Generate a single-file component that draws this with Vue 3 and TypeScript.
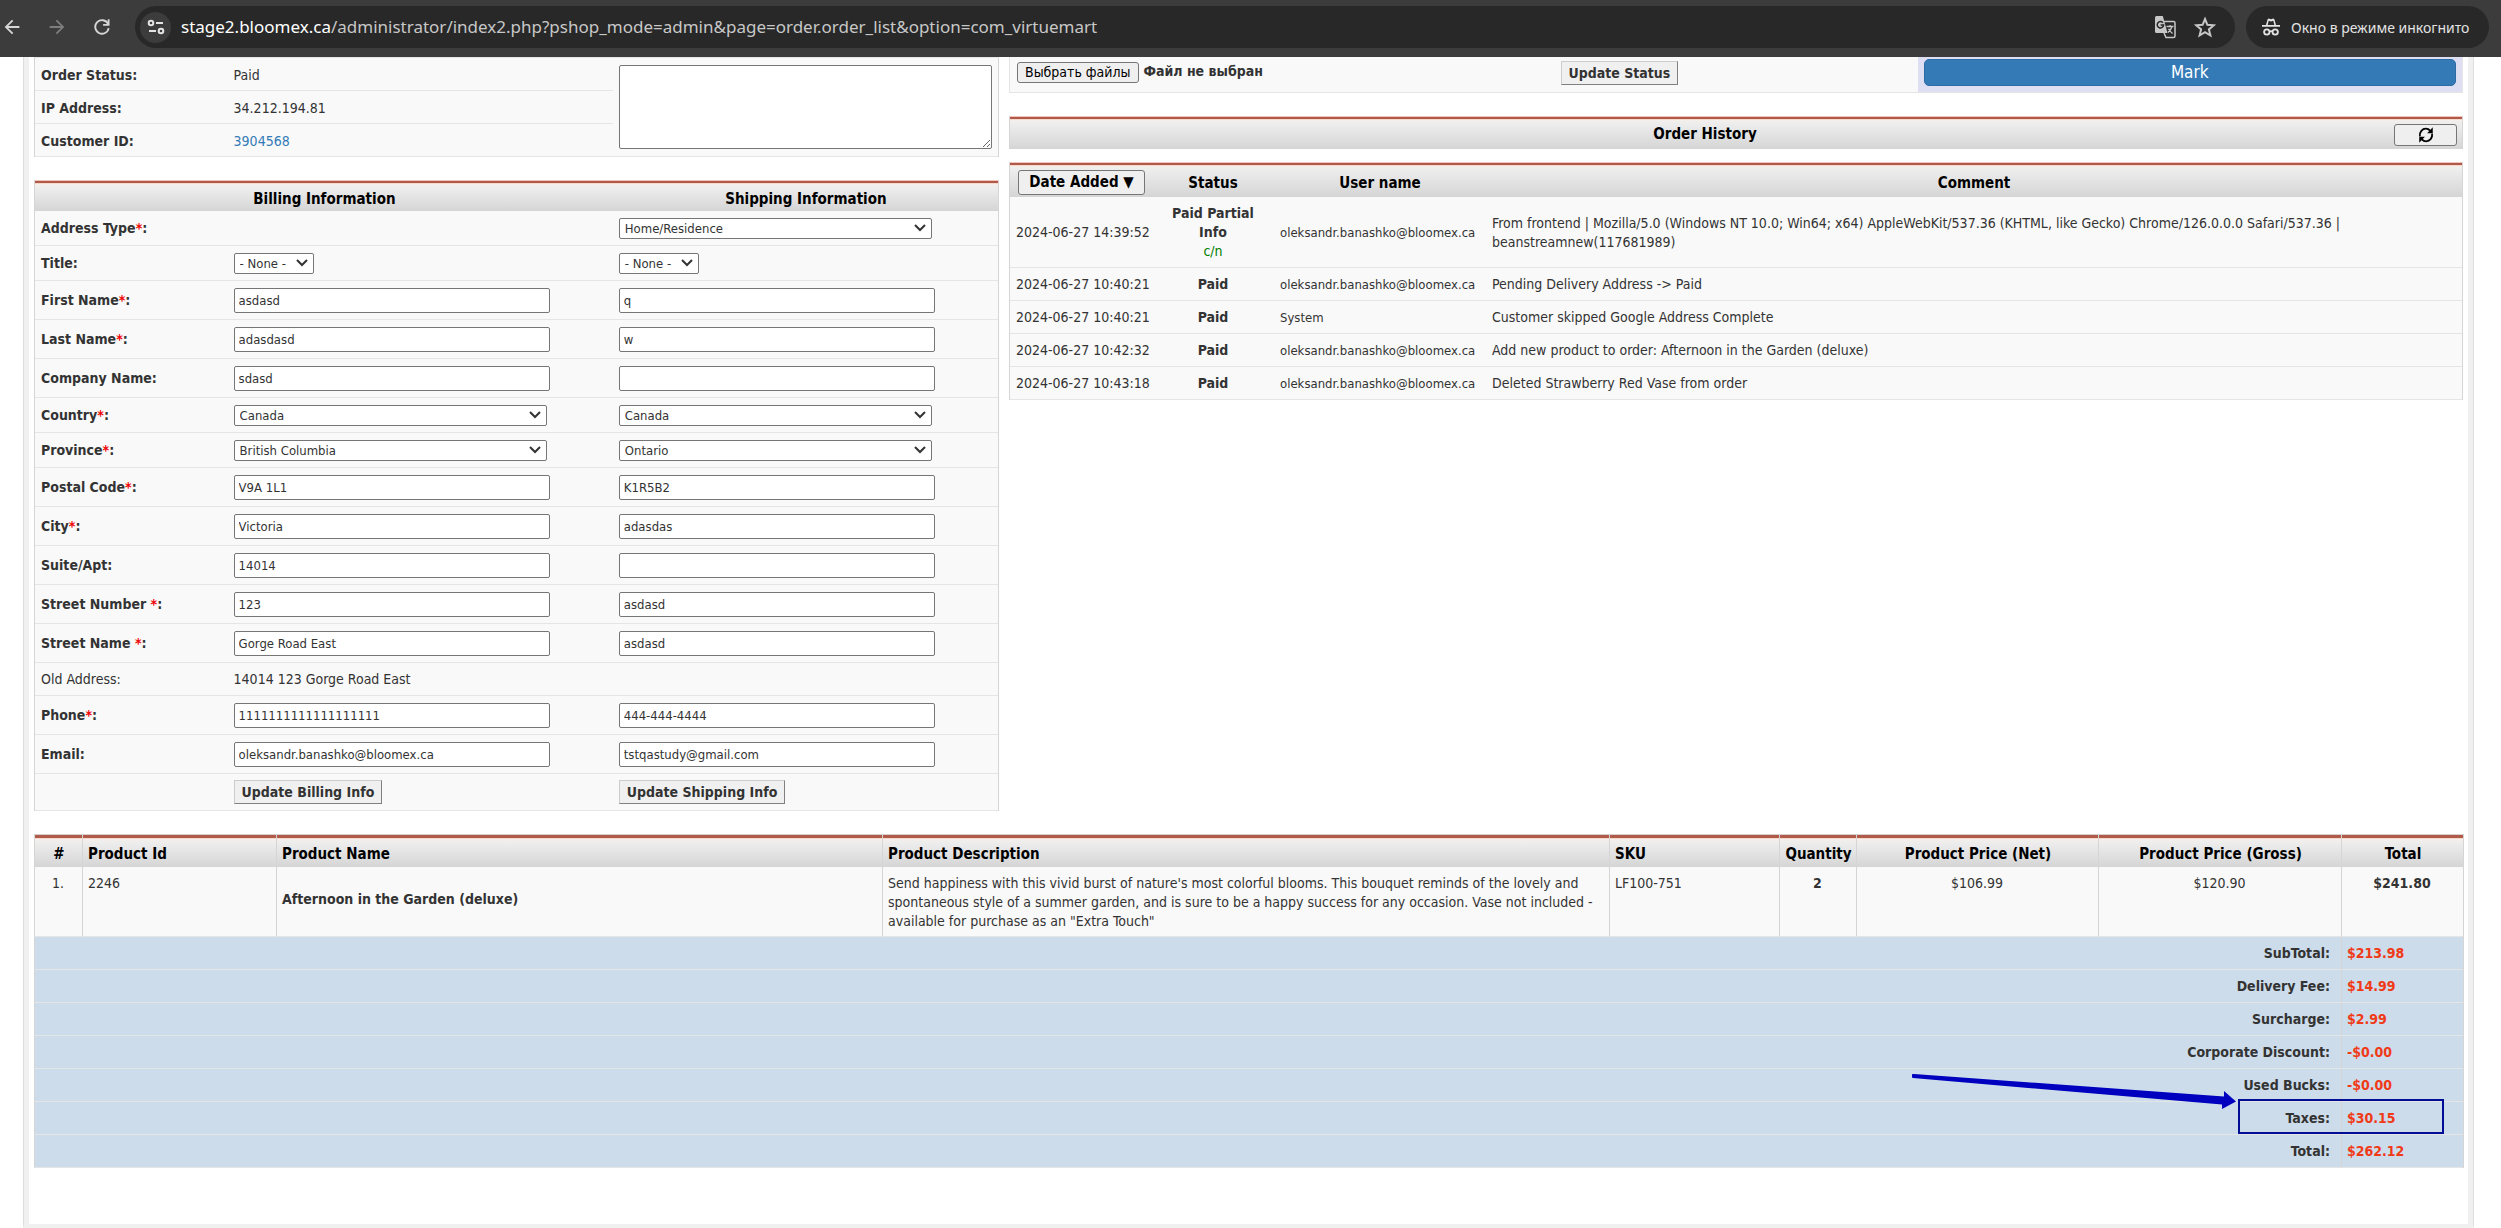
<script setup lang="ts">
interface Field {
  id: string
  label: string
  required?: boolean
  spaced?: boolean
  kind: 'input' | 'select' | 'short' | 'text'
  billing?: string
  shipping?: string
}

interface HistoryRow {
  date: string
  status: string
  note?: string
  user: string
  comment: string
}

interface TotalRow {
  label: string
  value: string
  marked?: boolean
}

const summary = [
  { label: 'Order Status:', value: 'Paid' },
  { label: 'IP Address:', value: '34.212.194.81' },
  { label: 'Customer ID:', value: '3904568', link: true },
]

const fields: Field[] = [
  { id: 'addr-type', label: 'Address Type', required: true, kind: 'select', shipping: 'Home/Residence' },
  { id: 'title', label: 'Title', kind: 'short', billing: '- None -', shipping: '- None -' },
  { id: 'first', label: 'First Name', required: true, kind: 'input', billing: 'asdasd', shipping: 'q' },
  { id: 'last', label: 'Last Name', required: true, kind: 'input', billing: 'adasdasd', shipping: 'w' },
  { id: 'company', label: 'Company Name', kind: 'input', billing: 'sdasd', shipping: '' },
  { id: 'country', label: 'Country', required: true, kind: 'select', billing: 'Canada', shipping: 'Canada' },
  { id: 'province', label: 'Province', required: true, kind: 'select', billing: 'British Columbia', shipping: 'Ontario' },
  { id: 'postal', label: 'Postal Code', required: true, kind: 'input', billing: 'V9A 1L1', shipping: 'K1R5B2' },
  { id: 'city', label: 'City', required: true, kind: 'input', billing: 'Victoria', shipping: 'adasdas' },
  { id: 'suite', label: 'Suite/Apt', kind: 'input', billing: '14014', shipping: '' },
  { id: 'street-no', label: 'Street Number', required: true, spaced: true, kind: 'input', billing: '123', shipping: 'asdasd' },
  { id: 'street', label: 'Street Name', required: true, spaced: true, kind: 'input', billing: 'Gorge Road East', shipping: 'asdasd' },
  { id: 'old', label: 'Old Address', kind: 'text', billing: '14014 123 Gorge Road East' },
  { id: 'phone', label: 'Phone', required: true, kind: 'input', billing: '1111111111111111111', shipping: '444-444-4444' },
  { id: 'email', label: 'Email', kind: 'input', billing: 'oleksandr.banashko@bloomex.ca', shipping: 'tstqastudy@gmail.com' },
]

const sides = ['billing', 'shipping'] as const

const history: HistoryRow[] = [
  {
    date: '2024-06-27 14:39:52',
    status: 'Paid Partial Info',
    note: 'c/n',
    user: 'oleksandr.banashko@bloomex.ca',
    comment:
      'From frontend | Mozilla/5.0 (Windows NT 10.0; Win64; x64) AppleWebKit/537.36 (KHTML, like Gecko) Chrome/126.0.0.0 Safari/537.36 | beanstreamnew(117681989)',
  },
  { date: '2024-06-27 10:40:21', status: 'Paid', user: 'oleksandr.banashko@bloomex.ca', comment: 'Pending Delivery Address -> Paid' },
  { date: '2024-06-27 10:40:21', status: 'Paid', user: 'System', comment: 'Customer skipped Google Address Complete' },
  { date: '2024-06-27 10:42:32', status: 'Paid', user: 'oleksandr.banashko@bloomex.ca', comment: 'Add new product to order: Afternoon in the Garden (deluxe)' },
  { date: '2024-06-27 10:43:18', status: 'Paid', user: 'oleksandr.banashko@bloomex.ca', comment: 'Deleted Strawberry Red Vase from order' },
]

const totals: TotalRow[] = [
  { label: 'SubTotal:', value: '$213.98' },
  { label: 'Delivery Fee:', value: '$14.99' },
  { label: 'Surcharge:', value: '$2.99' },
  { label: 'Corporate Discount:', value: '-$0.00' },
  { label: 'Used Bucks:', value: '-$0.00' },
  { label: 'Taxes:', value: '$30.15', marked: true },
  { label: 'Total:', value: '$262.12' },
]
</script>

<template>
  <div class="window">
    <header class="toolbar">
      <nav class="nav">
        <button type="button" aria-label="Back">
          <svg viewBox="0 0 24 24"><path fill="#d6d6d6" d="M20 11H7.83l5.59-5.59L12 4l-8 8 8 8 1.41-1.41L7.83 13H20v-2z" /></svg>
        </button>
        <button type="button" aria-label="Forward">
          <svg viewBox="0 0 24 24"><path fill="#7d7d7d" d="M4 13h12.17l-5.59 5.59L12 20l8-8-8-8-1.41 1.41L16.17 11H4v2z" /></svg>
        </button>
        <button type="button" aria-label="Reload">
          <svg viewBox="0 0 24 24" fill="none" stroke="#d6d6d6" stroke-width="2">
            <path d="M18.6 8.6A7.4 7.4 0 1 0 19.3 13.2" />
            <path d="M19.2 3.6v6h-6" />
          </svg>
        </button>
      </nav>
      <div class="address">
        <button class="site" type="button" aria-label="Site information">
          <svg viewBox="0 0 20 20" fill="none" stroke="#e3e3e3" stroke-width="2">
            <circle cx="5" cy="6" r="2.3" />
            <path d="M10 6h7" />
            <circle cx="15" cy="14" r="2.3" />
            <path d="M3 14h7" />
          </svg>
        </button>
        <div class="url"><b>stage2.bloomex.ca</b>/administrator/index2.php?pshop_mode=admin&amp;page=order.order_list&amp;option=com_virtuemart</div>
        <button class="tool" type="button" aria-label="Translate">
          <svg viewBox="0 0 24 24">
            <path d="M11 6.500h9.500A1.500 1.500 0 0 1 22 8v13a1.500 1.500 0 0 1-1.500 1.500H13L11 18" fill="none" stroke="#c7c7c7" stroke-width="1.500" />
            <path d="M3.500 1h6.300l4.700 17h-11A1.500 1.500 0 0 1 2 16.500v-14A1.500 1.500 0 0 1 3.500 1z" fill="#c7c7c7" />
            <path d="M9.900 7.800A3.200 3.200 0 1 0 10.600 10H7.600" fill="none" stroke="#282828" stroke-width="1.500" />
            <path d="M13.500 11.500h7M17 10v1.500M19 11.500c-.8 2.800-2.300 4.500-4 6M15.500 13.700c.9 1.800 2.300 3.300 4 4.800" fill="none" stroke="#c7c7c7" stroke-width="1.300" />
          </svg>
        </button>
        <button class="tool" type="button" aria-label="Bookmark">
          <svg viewBox="0 0 24 24" fill="none" stroke="#c7c7c7" stroke-width="2">
            <path d="M12 4l2.400 5.800 6.300.5-4.800 4.100 1.500 6.100L12 17.200l-5.400 3.300 1.500-6.100-4.800-4.100 6.300-.5z" />
          </svg>
        </button>
      </div>
      <button class="incognito" type="button">
        <svg viewBox="0 0 20 20">
          <path d="M6.600 2.200l1.100-.7L10 2.200l2.300-.7 1.100.7L15 8h4v1.800H1V8h4z" fill="#e3e3e3" />
          <path d="M7.700 3.800l-1 4.200h6.600l-1-4.200L10 4.500z" fill="#282828" />
          <g fill="none" stroke="#e3e3e3" stroke-width="1.800">
            <circle cx="5.800" cy="15" r="2.700" />
            <circle cx="14.200" cy="15" r="2.700" />
            <path d="M8.500 14.600q1.500-1 3 0" />
          </g>
        </svg>
        <span>Окно в режиме инкогнито</span>
      </button>
    </header>

    <main class="frame">
      <div class="columns">
        <section class="left">
          <table class="grid summary">
            <colgroup><col class="w20" /><col class="w40" /><col class="w40" /></colgroup>
            <tbody>
              <tr v-for="(row, i) in summary" :key="row.label">
                <th scope="row">{{ row.label }}</th>
                <td>
                  <a v-if="row.link" href="#customer">{{ row.value }}</a>
                  <template v-else>{{ row.value }}</template>
                </td>
                <td v-if="i === 0" rowspan="3" class="notes"><textarea aria-label="Order comment"></textarea></td>
              </tr>
            </tbody>
          </table>

          <table class="grid form">
            <colgroup><col class="w20" /><col class="w40" /><col class="w40" /></colgroup>
            <thead>
              <tr>
                <th colspan="2">Billing Information</th>
                <th>Shipping Information</th>
              </tr>
            </thead>
            <tbody>
              <tr v-for="f in fields" :key="f.id" :class="f.kind">
                <th scope="row" :class="{ plain: f.kind === 'text' }">
                  <label :for="'billing-' + f.id">{{ f.label }}{{ f.spaced ? ' ' : '' }}<i v-if="f.required">*</i>:</label>
                </th>
                <td v-for="side in sides" :key="side">
                  <template v-if="f[side] !== undefined">
                    <input v-if="f.kind === 'input'" :id="side + '-' + f.id" type="text" :value="f[side]" :aria-label="side + ' ' + f.label" />
                    <template v-else-if="f.kind === 'text'">{{ f[side] }}</template>
                    <select v-else :id="side + '-' + f.id" :aria-label="side + ' ' + f.label">
                      <option>{{ f[side] }}</option>
                    </select>
                  </template>
                </td>
              </tr>
              <tr class="actions">
                <td></td>
                <td><button class="classic" type="button">Update Billing Info</button></td>
                <td><button class="classic" type="button">Update Shipping Info</button></td>
              </tr>
            </tbody>
          </table>
        </section>

        <section class="right">
          <div class="status-bar">
            <label class="file">
              <input type="file" multiple />
              <span class="file-button">Выбрать файлы</span>
              <b>Файл не выбран</b>
            </label>
            <div class="update"><button class="classic" type="button">Update Status</button></div>
            <div class="mark"><button type="button">Mark</button></div>
          </div>

          <div class="title-bar">
            <h2>Order History</h2>
            <button type="button" aria-label="Refresh">
              <svg viewBox="0 0 20 20">
                <path d="M3.200 11.500C2.500 6.500 6 3 9.800 3c2 0 3.600.8 4.700 2.100M16.800 8.500C17.500 13.500 14 17 10.200 17c-2 0-3.600-.8-4.700-2.100" fill="none" stroke="#000" stroke-width="2" />
                <path d="M17.500 1.500v6.500h-6.300zM2.500 18.500V12h6.300z" fill="#000" />
              </svg>
            </button>
          </div>

          <table class="grid history">
            <colgroup><col class="c-date" /><col class="c-status" /><col class="c-user" /><col class="c-comment" /></colgroup>
            <thead>
              <tr>
                <th><button type="button">Date Added ▼</button></th>
                <th>Status</th>
                <th>User name</th>
                <th>Comment</th>
              </tr>
            </thead>
            <tbody>
              <tr v-for="(h, i) in history" :key="i">
                <td class="date">{{ h.date }}</td>
                <td class="center"><b>{{ h.status }}</b><span v-if="h.note" class="note">{{ h.note }}</span></td>
                <td class="user">{{ h.user }}</td>
                <td>{{ h.comment }}</td>
              </tr>
            </tbody>
          </table>
        </section>
      </div>

      <table class="grid products">
        <colgroup>
          <col class="p-num" /><col class="p-id" /><col class="p-name" /><col class="p-desc" /><col class="p-sku" />
          <col class="p-qty" /><col class="p-net" /><col class="p-gross" /><col class="p-total" />
        </colgroup>
        <thead>
          <tr>
            <th class="center">#</th>
            <th>Product Id</th>
            <th>Product Name</th>
            <th>Product Description</th>
            <th>SKU</th>
            <th class="center">Quantity</th>
            <th class="center">Product Price (Net)</th>
            <th class="center">Product Price (Gross)</th>
            <th class="center">Total</th>
          </tr>
        </thead>
        <tbody>
          <tr class="item">
            <td class="center">1.</td>
            <td>2246</td>
            <td class="name"><b>Afternoon in the Garden (deluxe)</b></td>
            <td>Send happiness with this vivid burst of nature's most colorful blooms. This bouquet reminds of the lovely and spontaneous style of a summer garden, and is sure to be a happy success for any occasion. Vase not included - available for purchase as an "Extra Touch"</td>
            <td>LF100-751</td>
            <td class="center"><b>2</b></td>
            <td class="center">$106.99</td>
            <td class="center">$120.90</td>
            <td class="center"><b>$241.80</b></td>
          </tr>
          <tr v-for="t in totals" :key="t.label" class="sum">
            <th colspan="8" scope="row">{{ t.label }}</th>
            <td>
              {{ t.value }}
              <template v-if="t.marked">
                <span class="marker"></span>
                <svg class="arrow" viewBox="0 0 324 36"><path d="M2 0L312 22.500V17L324 27.500 310 35V30.500L1 4A2 2 0 0 1 2 0z" fill="#0000bf" /></svg>
              </template>
            </td>
          </tr>
        </tbody>
      </table>
    </main>
  </div>
</template>

<style>
body {
  margin: 0;
  background: #fff;
}
</style>

<style scoped>
.window {
  font-family: "DejaVu Sans Condensed", "Noto Sans", sans-serif;
  font-size: 14px;
  line-height: 19px;
  color: #333;
}
.window * {
  box-sizing: border-box;
}
button,
input,
select,
textarea {
  font: inherit;
  color: inherit;
  margin: 0;
}
.toolbar {
  display: flex;
  align-items: center;
  height: 57px;
  padding: 0 12px 3px 0;
  background: #3c3c3c;
}
.toolbar button {
  border: 0;
  padding: 0;
  background: none;
  flex: none;
}
.nav {
  display: flex;
  gap: 21px;
  margin-right: 21px;
}
.nav button {
  width: 24px;
  height: 24px;
}
.nav svg {
  display: block;
  width: 22px;
  height: 22px;
  margin: 1px auto;
}
.address {
  flex: 1;
  display: flex;
  align-items: center;
  height: 42px;
  padding: 0 18px 0 5px;
  border-radius: 21px;
  background: #282828;
}
.toolbar .site {
  display: grid;
  place-items: center;
  width: 31px;
  height: 31px;
  margin-right: 10px;
  border-radius: 50%;
  background: #3c3c3c;
}
.site svg {
  width: 20px;
  height: 20px;
}
.url {
  flex: 1;
  font-family: "Noto Sans", sans-serif;
  font-size: 17px;
  line-height: 24px;
  color: #c7c7c7;
  white-space: nowrap;
  overflow: hidden;
}
.url b {
  font-weight: 400;
  color: #fff;
}
.tool {
  width: 24px;
  height: 24px;
  margin-left: 16px;
}
.tool svg {
  display: block;
  width: 24px;
  height: 24px;
}
.toolbar .incognito {
  display: flex;
  align-items: center;
  gap: 10px;
  min-width: 243px;
  height: 42px;
  margin-left: 11px;
  padding: 0 15px;
  border-radius: 21px;
  background: #282828;
  font-family: "Noto Sans", sans-serif;
  font-size: 14px;
  color: #e3e3e3;
}
.incognito svg {
  width: 20px;
  height: 20px;
}
.frame {
  margin: 0 27px 0 23px;
  padding: 0 5px 56px;
  border: 1px solid #ddd;
  border-width: 0 1px 4px;
  border-bottom-color: #f0f0f0;
  box-shadow: inset 5px 0 #f0f0f0, inset -5px 0 #f0f0f0;
}
.columns,
.products {
  margin: 0 5px;
}
.columns {
  display: flex;
  align-items: flex-start;
  gap: 10px;
}
.left {
  flex: 965 1 0;
  min-width: 0;
}
.right {
  flex: 1454 1 0;
  min-width: 0;
}
.grid {
  width: 100%;
  table-layout: fixed;
  border-collapse: separate;
  border-spacing: 0;
  border: 1px solid #d5d5d5;
  border-width: 0 1px;
  background: #f9f9f9;
}
.grid td,
.grid tbody th {
  padding: 0 6px;
  border-bottom: 1px solid #e5e5e5;
  text-align: left;
  font-weight: 400;
}
.grid tbody th {
  font-weight: 700;
}
.grid tbody th.plain {
  font-weight: 400;
}
.grid thead th {
  padding: 8px 4px 0 5px;
  font-size: 15px;
  font-weight: 700;
  color: #000;
}
.grid thead tr,
.title-bar {
  background: linear-gradient(#f0c4b8 1px, #b05a4b 1px 3px, #f7d8cb 3px 4px, #f3f0ec 4px, #ececec 9px, #d5d5d5);
}
.grid .center {
  text-align: center;
}
.w20 {
  width: 20%;
}
.w40 {
  width: 40%;
}
.summary {
  border-top: 1px solid #e5e5e5;
  margin-bottom: 23px;
}
.summary th,
.summary td {
  height: 33px;
}
.grid.summary th,
.grid.summary td:not(.notes) {
  padding-top: 2px;
}
.summary a {
  color: #337ab7;
  text-decoration: none;
}
.notes textarea {
  display: block;
  width: 100%;
  height: 84px;
  border: 1px solid #767676;
  border-radius: 2px;
  background: #fff;
}
.form thead tr {
  height: 31px;
}
.form tbody tr {
  height: 39px;
}
.form tbody tr.select,
.form tbody tr.short {
  height: 35px;
}
.form tbody tr.text {
  height: 33px;
}
.form tbody tr.actions {
  height: 37px;
}
.form i {
  font-style: normal;
  color: #ee0000;
}
.form input {
  display: block;
  width: 316px;
  max-width: 100%;
  height: 25px;
  padding: 0 4px;
  border: 1px solid #767676;
  border-radius: 2px;
  background: #fff;
  font-size: 13px;
}
.form select {
  display: block;
  appearance: none;
  width: 313px;
  max-width: 100%;
  height: 21px;
  padding: 0 20px 0 5px;
  border: 1px solid #767676;
  border-radius: 2px;
  background: #fff url("data:image/svg+xml,%3Csvg xmlns='http://www.w3.org/2000/svg' width='12' height='8' viewBox='0 0 12 8'%3E%3Cpath d='M1 1l5 5 5-5' fill='none' stroke='%23333' stroke-width='2'/%3E%3C/svg%3E") no-repeat right 5px center;
  font-size: 13px;
  line-height: 19px;
}
.form .short select {
  width: 80px;
}
.classic {
  display: block;
  height: 24px;
  padding: 0 7px;
  border: 1px solid;
  border-color: #ccc #808080 #808080 #ccc;
  background: #f0f0f0;
  font-weight: 700;
  line-height: 19px;
  white-space: nowrap;
}
.status-bar {
  display: grid;
  grid-template-columns: 3fr 2fr 3fr;
  height: 36px;
  margin-bottom: 23px;
  border: 1px solid #e5e5e5;
  border-width: 0 1px 1px;
  background: #f9f9f9;
}
.file {
  display: flex;
  align-items: flex-start;
  padding: 5px 7px;
  gap: 5px;
}
.file input {
  position: absolute;
  width: 1px;
  height: 1px;
  opacity: 0;
}
.file-button {
  height: 21px;
  padding: 0 7px;
  border: 1px solid #767676;
  border-radius: 3px;
  background: #efefef;
  color: #000;
  white-space: nowrap;
}
.update {
  padding: 4px 6px;
}
.mark {
  padding: 2px 6px 6px;
  background: #dedff3;
}
.mark button {
  display: block;
  width: 100%;
  height: 27px;
  padding: 0;
  border: 1px solid #2e6da4;
  border-radius: 5px;
  background: #337ab7;
  color: #fff;
  font-size: 17px;
}
.title-bar {
  display: flex;
  align-items: center;
  height: 33px;
  margin-bottom: 13px;
  padding: 4px 5px 0 0;
  border: 1px solid #d5d5d5;
  border-width: 0 1px;
}
.title-bar h2 {
  flex: 1;
  margin: 0;
  padding-left: 6px;
  text-align: center;
  font-size: 15px;
  line-height: 19px;
  color: #000;
}
.title-bar button {
  display: grid;
  place-items: center;
  width: 63px;
  height: 22px;
  padding: 0;
  border: 1px solid #767676;
  border-radius: 3px;
  background: #efefef;
}
.title-bar svg {
  width: 18px;
  height: 18px;
}
.c-date {
  width: 142px;
}
.c-status {
  width: 122px;
}
.c-user {
  width: 212px;
}
.history thead tr {
  height: 35px;
}
.grid.history thead th {
  padding: 8px 6px 0;
}
.grid.history thead th:first-child {
  padding-top: 6px;
}
.history thead button {
  display: block;
  width: 127px;
  height: 25px;
  margin-left: 2px;
  padding: 0;
  border: 1px solid #767676;
  border-radius: 3px;
  background: #efefef;
  color: #000;
  font-weight: 700;
  white-space: nowrap;
}
.history tbody td {
  padding: 7px 6px 6px;
}
.history .date,
.history .user {
  white-space: nowrap;
}
.history .user {
  font-size: 13px;
}
.note {
  display: block;
  color: #008000;
}
.products {
  width: calc(100% - 10px);
  margin-top: 23px;
  border-left: 0;
}
.products thead tr {
  height: 33px;
  background: linear-gradient(#d8d0cd 1px, #b05a4b 1px 4px, #f7d8cb 4px 5px, #f3f0ec 5px, #ececec 10px, #d5d5d5);
}
.products thead th {
  text-align: left;
}
.products th,
.products td {
  border-left: 1px solid #d5d5d5;
}
.products .item td {
  padding: 7px 6px 5px 5px;
  vertical-align: top;
}
.products .item .name {
  padding-top: 23px;
}
.products .sum {
  height: 33px;
  background: #ccdceb;
}
.products .sum th {
  padding-right: 11px;
  text-align: right;
}
.products .sum td {
  position: relative;
  padding-left: 5px;
  font-weight: 700;
  color: #f03a17;
}
.marker {
  position: absolute;
  top: -3px;
  left: -104px;
  width: 206px;
  height: 35px;
  border: 2px solid #000d94;
}
.arrow {
  position: absolute;
  top: -28px;
  left: -430px;
  width: 324px;
  height: 36px;
}
.p-num {
  width: 48px;
}
.p-id {
  width: 194px;
}
.p-name {
  width: 606px;
}
.p-desc {
  width: 727px;
}
.p-sku {
  width: 170px;
}
.p-qty {
  width: 77px;
}
.p-net {
  width: 242px;
}
.p-gross {
  width: 243px;
}
.p-total {
  width: 122px;
}
</style>
